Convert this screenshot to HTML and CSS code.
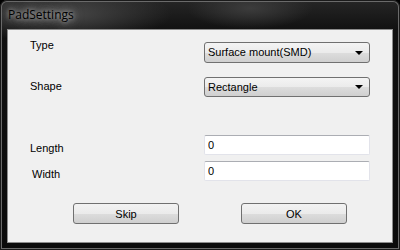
FILE: index.html
```html
<!DOCTYPE html>
<html lang="en">

<head>
    <meta charset="UTF-8">
    <title>PadSettings</title>
    <link rel="stylesheet" href="styles.css">
</head>

<body>
    <div class="window">
        <div class="titlebar">
            <span class="title">PadSettings</span>
        </div>

        <div class="client">
            <div class="row row-type">
                <label class="label">Type</label>
                <div class="select">
                    <span>Surface mount(SMD)</span>
                    <span class="arrow"></span>
                </div>
            </div>

            <div class="row row-shape">
                <label class="label">Shape</label>
                <div class="select">
                    <span>Rectangle</span>
                    <span class="arrow"></span>
                </div>
            </div>

            <div class="row row-length">
                <label class="label">Length</label>
                <input class="text-input" type="text" value="0">
            </div>

            <div class="row row-width">
                <label class="label label-width">Width</label>
                <input class="text-input" type="text" value="0">
            </div>

            <div class="button-row">
                <button class="btn btn-skip">Skip</button>
                <button class="btn btn-ok">OK</button>
            </div>
        </div>
    </div>
</body>

</html>
```

FILE: styles.css
```css
html,
body {
    margin: 0;
    padding: 0;
    background-color: #000;
}

body {
    font-family: "Liberation Sans", Arial, sans-serif;
    font-size: 11px;
    color: #000;
}

.window {
    width: 400px;
    height: 250px;
    box-sizing: border-box;
    padding: 0 7px 7px 7px;
    display: flex;
    flex-direction: column;
    border-radius: 7px 7px 0 0;
    background:
        radial-gradient(ellipse 160px 40px at 60px 14px, #4a4a4a, rgba(0, 0, 0, 0) 70%),
        radial-gradient(ellipse 90px 30px at 250px 8px, #3c3c3c, rgba(0, 0, 0, 0) 70%),
        linear-gradient(#262626, #111 30px, #0b0b0b);
    box-shadow: inset 0 0 0 1px #1a1a1a, inset 0 0 0 2px #6a6a6a;
}

.titlebar {
    height: 29px;
    display: flex;
    align-items: center;
    padding-left: 1px;
}

.title {
    font-family: "Open Sans", "DejaVu Sans", sans-serif;
    font-size: 12px;
    color: #000;
    margin-top: -1px;
    text-shadow: 0 0 4px #b0b0b0, 0 0 8px #9a9a9a, 0 0 12px #7a7a7a;
}

.client {
    flex: 1;
    background-color: #f0f0f0;
    border: 1px solid #8c8c8c;
}

.row {
    display: flex;
    align-items: flex-start;
    line-height: 13px;
}

.label {
    width: 174px;
    padding-left: 22px;
}

.label-width {
    width: 172px;
    padding-left: 24px;
}

.row-type {
    margin-top: 9px;
}

.row-type .select {
    margin-top: 3px;
    height: 21px;
}

.row-shape {
    margin-top: 14px;
}

.row-shape .label {
    margin-top: 3px;
}

.row-length {
    margin-top: 38px;
}

.row-width {
    margin-top: 6px;
}

.row-length .label,
.row-width .label {
    margin-top: 7px;
}

.select {
    box-sizing: border-box;
    width: 166px;
    height: 20px;
    border: 1px solid #707070;
    border-radius: 3px;
    background: linear-gradient(#f4f4f4, #ebebeb 50%, #dddddd 51%, #cfcfcf);
    display: flex;
    align-items: center;
    justify-content: space-between;
    padding: 0 6px 0 3px;
}

.arrow {
    width: 0;
    height: 0;
    border-left: 4px solid transparent;
    border-right: 4px solid transparent;
    border-top: 4px solid #000;
}

.text-input {
    box-sizing: border-box;
    width: 166px;
    height: 20px;
    margin: 0;
    padding: 0 3px;
    border: 1px solid #e2e3ea;
    border-top-color: #abadb3;
    border-radius: 2px;
    background-color: #fff;
    font-family: "Liberation Sans", Arial, sans-serif;
    font-size: 11px;
    color: #000;
}

.button-row {
    display: flex;
    margin-top: 22px;
}

.btn {
    box-sizing: border-box;
    width: 106px;
    height: 21px;
    border: 1px solid #707070;
    border-radius: 3px;
    background: linear-gradient(#f2f2f2, #ebebeb 50%, #dddddd 51%, #cfcfcf);
    font-family: "Liberation Sans", Arial, sans-serif;
    font-size: 11px;
    color: #000;
    padding: 0;
}

.btn-skip {
    margin-left: 65px;
}

.btn-ok {
    margin-left: 62px;
}
```
